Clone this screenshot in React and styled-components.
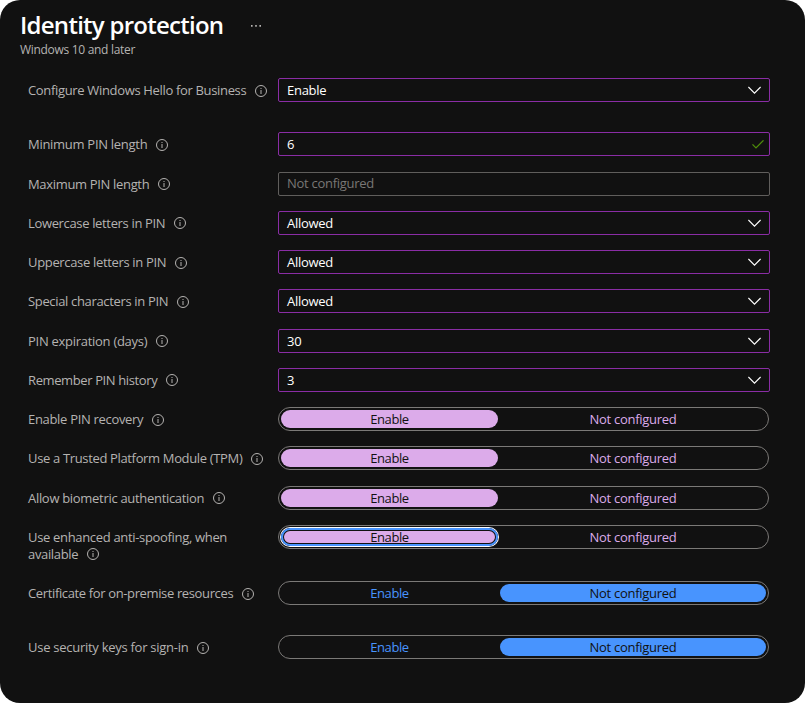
import React from "react";
import styled, { createGlobalStyle, css } from "styled-components";

const Global = createGlobalStyle`
  * { box-sizing: border-box; }
  body { margin: 0; background: #fff; }
  button, input { font: inherit; }
`;

const Panel = styled.main`
  width: 805px;
  height: 703px;
  padding: 9px 35px 0 20px;
  border-radius: 20px;
  background: #111;
  color: #b5b3b1;
  font: 400 13px/17px "Open Sans", "Noto Sans", sans-serif;
  overflow: hidden;
`;

const Header = styled.header`
  display: flex;
  align-items: center;
  gap: 27px;
  height: 32px;
`;

const Title = styled.h1`
  width: 203px;
  margin: 0;
  color: #fff;
  font-size: 24px;
  font-weight: 650;
  line-height: 32px;
  letter-spacing: -0.74px;
  white-space: nowrap;
`;

const MoreIcon = styled.svg`
  width: 12px;
  height: 2px;
  margin-top: 2px;
  fill: #b5b3b1;
`;

const Subtitle = styled.p`
  height: 37px;
  padding-top: 1px;
  margin: 0;
  font-size: 12px;
  line-height: 16px;
  letter-spacing: -0.305px;
`;

const Row = styled.div`
  display: grid;
  grid-template-columns: 250px 492px;
  height: 24px;
  margin-bottom: ${(p) => p.$gap}px;
`;

const Form = styled.form`
  margin-left: 8px;
`;

const Label = styled.div`
  padding-top: 4px;
  white-space: nowrap;
`;

const LabelLine = styled.div`
  display: flex;
  height: 17px;
  letter-spacing: ${(p) => p.$spacing}px;
`;

const InfoSvg = styled.svg`
  width: 12px;
  height: 12px;
  margin: ${(p) => p.$top}px 0 0 8.6px;
  flex: none;
`;

const Field = styled.div`
  display: flex;
  align-items: center;
  justify-content: space-between;
  height: 24px;
  padding: 0 8px;
  border: 1px solid ${(p) => (p.$muted ? "#605e5c" : "#8a2da5")};
  border-radius: 2px;
  color: ${(p) => (p.$muted ? "#797775" : "#fff")};
  letter-spacing: -0.28px;
  font-weight: ${(p) => (p.$muted ? 400 : 500)};
  padding-bottom: ${(p) => (p.$muted ? 2 : 0)}px;
`;

const Chevron = styled.svg`
  width: 13px;
  height: 8px;
  fill: none;
  stroke: #fff;
  stroke-width: 1.1;
`;

const Check = styled.svg`
  width: 12px;
  height: 9px;
  margin-right: -3px;
  fill: none;
  stroke: #4f8f0a;
  stroke-width: 1.3;
`;

const Toggle = styled.div`
  display: grid;
  grid-template-columns: 217px 266px;
  gap: 2px;
  width: 491px;
  height: 24px;
  padding: 2px;
  border: 1px solid #7b7977;
  border-radius: 12px;
`;

const Option = styled.button`
  display: flex;
  align-items: center;
  justify-content: center;
  height: 18px;
  padding: 0;
  border: 0;
  border-radius: 9px;
  background: ${(p) => (p.$on ? p.$tone : "transparent")};
  color: ${(p) => (p.$on ? "#111" : p.$tone)};
  letter-spacing: ${(p) => p.$spacing}px;
  ${(p) =>
    p.$focused &&
    css`
      box-shadow: 0 0 0 1px #fff, inset 0 0 0 2px #4894fe, inset 0 0 0 3px #111;
    `}
`;

const PINK = "#dcabea";
const BLUE = "#4894fe";

const rows = [
  { lines: [["Configure Windows Hello for Business", -0.335]], kind: "select", value: "Enable", gap: 30 },
  { lines: [["Minimum PIN length", -0.285]], kind: "valid", value: "6", gap: 16 },
  { lines: [["Maximum PIN length", -0.33]], icon: 2, kind: "empty", value: "Not configured", gap: 15 },
  { lines: [["Lowercase letters in PIN", -0.345]], icon: 2, kind: "select", value: "Allowed", gap: 15 },
  { lines: [["Uppercase letters in PIN", -0.335]], kind: "select", value: "Allowed", gap: 15 },
  { lines: [["Special characters in PIN", -0.34]], kind: "select", value: "Allowed", gap: 16 },
  { lines: [["PIN expiration (days)", -0.28]], icon: 2, kind: "select", value: "30", gap: 15 },
  { lines: [["Remember PIN history", -0.385]], icon: 2, kind: "select", value: "3", gap: 15 },
  { lines: [["Enable PIN recovery", -0.315]], kind: "toggle", on: true, gap: 15 },
  { lines: [["Use a Trusted Platform Module (TPM)", -0.345]], kind: "toggle", on: true, gap: 16 },
  { lines: [["Allow biometric authentication", -0.305]], icon: 2, kind: "toggle", on: true, gap: 15 },
  {
    lines: [["Use enhanced anti-spoofing, when", -0.327], ["available", -0.34]],
    icon: 2, kind: "toggle", on: true, focused: true, gap: 32,
  },
  { lines: [["Certificate for on-premise resources", -0.365]], kind: "toggle", on: false, gap: 30 },
  { lines: [["Use security keys for sign-in", -0.27]], kind: "toggle", on: false, gap: 0 },
];

function Info({ top = 3 }) {
  return (
    <InfoSvg $top={top} viewBox="0 0 12 12">
      <circle cx="6" cy="6" r="5.5" fill="none" stroke="#b5b3b1" />
      <path d="M6 5v4M6 3v1" stroke="#b5b3b1" />
    </InfoSvg>
  );
}

function Control({ row }) {
  if (row.kind === "toggle") {
    const tone = row.on ? PINK : BLUE;
    return (
      <Toggle>
        <Option type="button" $on={row.on} $tone={tone} $focused={row.focused} $spacing={-0.4}>Enable</Option>
        <Option type="button" $on={!row.on} $tone={tone} $spacing={-0.28}>Not configured</Option>
      </Toggle>
    );
  }
  return (
    <Field $muted={row.kind === "empty"}>
      <span>{row.value}</span>
      {row.kind === "select" && <Chevron viewBox="0 0 13 8"><path d="M.4 1 6.5 7.1 12.6 1" /></Chevron>}
      {row.kind === "valid" && <Check viewBox="0 0 12 9"><path d="M.5 4.4 4 7.9 11.5 .4" /></Check>}
    </Field>
  );
}

export default function App() {
  return (
    <Panel>
      <Global />
      <Header>
        <Title>Identity protection</Title>
        <MoreIcon viewBox="0 0 12 2">
          <path d="M1 0h1.6v1.8H1zM5.2 0h1.6v1.8H5.2zM9.4 0H11v1.8H9.4z" />
        </MoreIcon>
      </Header>
      <Subtitle>Windows 10 and later</Subtitle>
      <Form>
        {rows.map((row) => (
          <Row key={row.lines[0][0]} $gap={row.gap}>
            <Label>
              {row.lines.map(([text, spacing], i) => (
                <LabelLine key={text} $spacing={spacing}>
                  <span>{text}</span>
                  {i === row.lines.length - 1 && <Info top={row.icon} />}
                </LabelLine>
              ))}
            </Label>
            <Control row={row} />
          </Row>
        ))}
      </Form>
    </Panel>
  );
}
